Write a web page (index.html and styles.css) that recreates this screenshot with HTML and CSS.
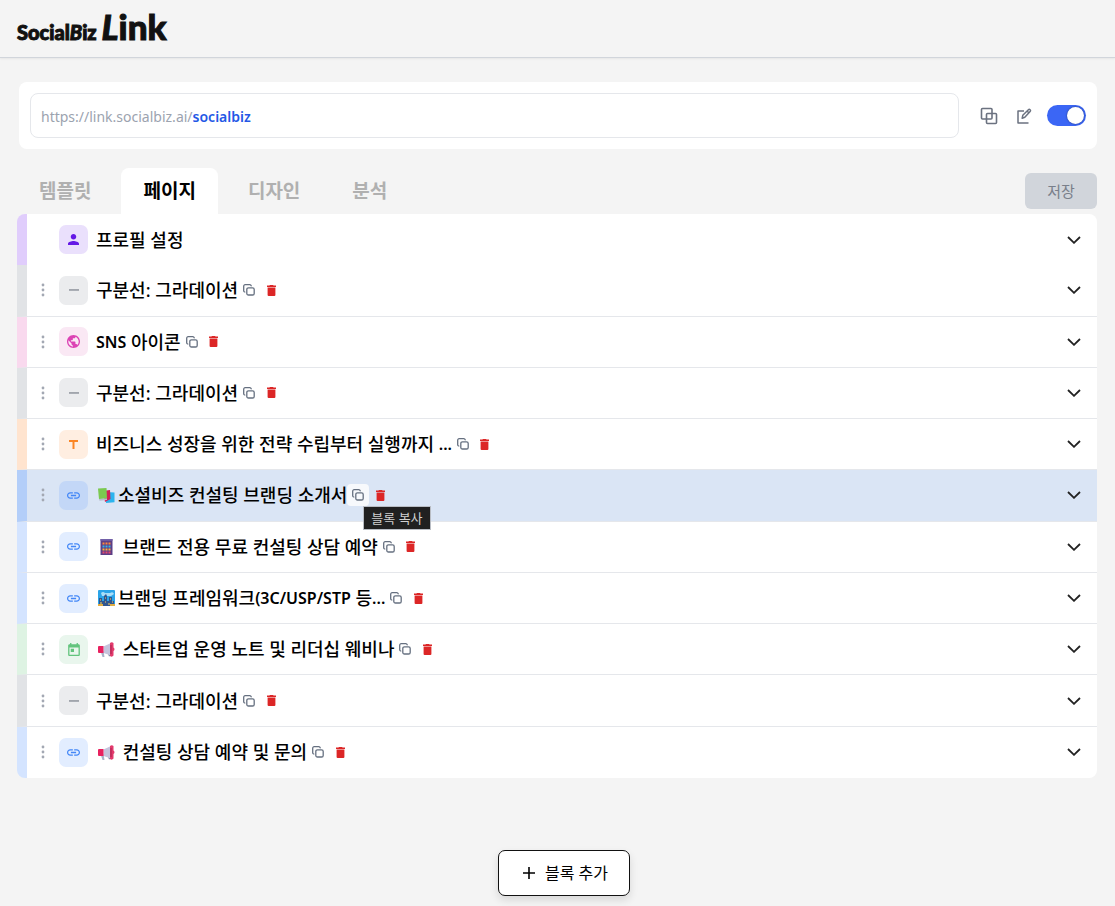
FILE: index.html
```html
<!DOCTYPE html>
<html lang="ko">
<head>
<meta charset="utf-8">
<meta name="viewport" content="width=device-width, initial-scale=1">
<title>SocialBiz Link</title>
<link rel="stylesheet" href="styles.css">
</head>
<body>
<svg class="sprite" aria-hidden="true">
  <symbol id="i-dots" viewBox="0 0 4 14"><circle cx="2" cy="2" r="1.4"/><circle cx="2" cy="7" r="1.4"/><circle cx="2" cy="12" r="1.4"/></symbol>
  <symbol id="i-copy" viewBox="0 0 12 12"><g fill="none" stroke="currentColor" stroke-width="1.300" stroke-linejoin="round" stroke-linecap="round"><rect x="3.8" y="3.8" width="7.4" height="7.2" rx="1.6"/><path d="M1.8 8C1.1 7.8.7 7.300.7 6.700V2.200C.7 1.300 1.300.7 2.200.7H6.800C7.500.7 8 1.100 8.200 1.800"/></g></symbol>
  <symbol id="i-trash" viewBox="0 0 9 11"><path d="M3 0h3l.6.6H9v1.500H0V.6h2.400zM.6 2.400h7.800V10q0 1-1 1H1.600q-1 0-1-1z"/></symbol>
  <symbol id="i-chev" viewBox="0 0 14 8"><path d="M1 1l6 5.800L13 1" fill="none" stroke="currentColor" stroke-width="1.800"/></symbol>
  <symbol id="i-link" viewBox="2 7 20 10"><path d="M3.900 12c0-1.710 1.390-3.100 3.100-3.100h4V7H7c-2.760 0-5 2.240-5 5s2.240 5 5 5h4v-1.900H7c-1.710 0-3.100-1.390-3.100-3.100zM8 13h8v-2H8v2zm9-6h-4v1.900h4c1.710 0 3.100 1.390 3.100 3.100s-1.390 3.100-3.100 3.100h-4V17h4c2.760 0 5-2.240 5-5s-2.240-5-5-5z"/></symbol>
  <symbol id="i-line" viewBox="0 0 10 2"><path d="M0 .2h10v1.500H0z"/></symbol>
  <symbol id="i-globe" viewBox="2 2 20 20"><path d="M12 2C6.480 2 2 6.480 2 12s4.480 10 10 10 10-4.480 10-10S17.520 2 12 2zm-1 17.930c-3.950-.49-7-3.850-7-7.930 0-.62.080-1.210.210-1.790L9 15v1c0 1.100.9 2 2 2v1.930zm6.900-2.540c-.26-.81-1-1.390-1.900-1.390h-1v-3c0-.55-.45-1-1-1H8v-2h2c.55 0 1-.45 1-1V7h2c1.100 0 2-.9 2-2v-.41c2.930 1.190 5 4.060 5 7.410 0 2.080-.8 3.970-2.100 5.390z"/></symbol>
  <symbol id="i-person" viewBox="4 4 16 16"><path d="M12 12c2.210 0 4-1.790 4-4s-1.790-4-4-4-4 1.790-4 4 1.790 4 4 4zm0 2c-2.670 0-8 1.340-8 4v2h16v-2c0-2.660-5.330-4-8-4z"/></symbol>
  <symbol id="i-type" viewBox="0 0 10 10"><path d="M0 0h10v2.200H6.100V10H3.900V2.200H0z"/></symbol>
  <symbol id="i-cal" viewBox="3 1 18 20"><path d="M19 3h-1V1h-2v2H8V1H6v2H5c-1.110 0-1.990.9-1.990 2L3 19c0 1.100.89 2 2 2h14c1.100 0 2-.9 2-2V5c0-1.100-.9-2-2-2zm0 16H5V8h14v11zM7 10h5v5H7z"/></symbol>
  <symbol id="i-horn" viewBox="0 0 17 15"><path d="M2.500 9h3l1 6h-2z" fill="#a9b0c8"/><path d="M9 9h3l1 4.500-2 1z" fill="#858da9"/><path d="M5.500 4.500L13 1v12.500L5.500 11z" fill="#c5c3dc"/><path d="M0 5q0-1 1-1h4.500v7H1q-1 0-1-1z" fill="#e8215f"/><path d="M12 1q1.700-1.400 3.500 0v4.500q2 1.500 0 3.500v4.500q-1.500 2-3.500.5z" fill="#e23a6c"/><path d="M13 3v9" stroke="#a62350"/></symbol>
  <symbol id="i-books" viewBox="0 0 17 15"><path d="M8 4l8.500.5v9.800L8 15z" fill="#2cb4ee"/><path d="M5 3l7-1 .5 9L7 14z" fill="#d21f58"/><path d="M0 .5L8.500 0 9 10.500 1 11z" fill="#7bc950"/><path d="M1 11l8-.5V12l-7.500.7z" fill="#b8bdd0"/></symbol>
  <symbol id="i-abacus" viewBox="0 0 12 16"><path d="M0 0h12v16H0z" fill="#5b3f86"/><path d="M0 0h12v1.800H0z" fill="#7260a8"/><g stroke-width="2" stroke-dasharray="2 1"><path d="M2 4.500h8" stroke="#ff8a3c"/><path d="M2 7.500h8" stroke="#35b7e8"/><path d="M2 10.500h8" stroke="#ffb23c"/><path d="M2 13.500h8" stroke="#e9476b"/></g></symbol>
  <symbol id="i-city" viewBox="0 0 17 16"><rect width="17" height="16" rx="1" fill="#2ba4e8"/><path d="M3 3q2-2 4 0h5q3-2 4 1l-3 2H4z" fill="#a9def8"/><path d="M1 16V8h3v3h2V6l2-2 1 2v5h2V7h3v4h2v5z" fill="#31568f"/><path d="M2 10h1m4-2h1m4 1h1M2 13h2m3-1h1m2 2h2m2-2h1" stroke="#ffd15a"/><path d="M0 14h5v2H0zm12 0h5v2h-5z" fill="#e0ad42"/></symbol>
</svg>

<header class="topbar">
  <a class="logo" href="#" aria-label="SocialBiz Link"><span class="logo-small">Social<i>B</i>iz</span><span class="logo-big"><i>L</i>ink</span></a>
</header>

<main class="page">
  <section class="url-card">
    <div class="url-field">
      <label for="slug">https://link.socialbiz.ai/</label>
      <input id="slug" type="text" value="socialbiz">
    </div>
    <div class="url-actions">
      <button type="button" class="plain" aria-label="링크 복사"><svg class="outline" width="18" height="18" viewBox="0 0 18 18" stroke="currentColor" stroke-width="1.600" stroke-linejoin="round"><rect x="1.500" y="1.500" width="10.500" height="10.500" rx="1"/><rect x="6.500" y="6.500" width="10" height="10" rx="1"/></svg></button>
      <button type="button" class="plain" aria-label="링크 편집"><svg class="outline" width="16" height="16" viewBox="0 0 16 16" stroke="currentColor" stroke-width="1.500" stroke-linejoin="round"><path d="M8 3H2v12h10.500"/><path d="M6.200 10.200l.6-2.900L12.400 1.700q.8-.8 1.700 0t0 1.800L8.800 9.300zM11 3l1.800 1.800"/></svg></button>
      <input class="switch" type="checkbox" role="switch" checked aria-label="공개">
    </div>
  </section>

  <div class="toolbar">
    <nav class="tabs">
      <button type="button" class="tab">템플릿</button>
      <button type="button" class="tab active">페이지</button>
      <button type="button" class="tab">디자인</button>
      <button type="button" class="tab">분석</button>
    </nav>
    <button type="button" class="save" disabled>저장</button>
  </div>

  <ul class="blocks">
    <li class="block profile">
      <span class="drag"></span>
      <span class="badge"><svg width="11" height="11"><use href="#i-person"/></svg></span>
      <span class="title">프로필 설정</span>
      <button type="button" class="expand" aria-label="펼치기"><svg width="14" height="8"><use href="#i-chev"/></svg></button>
    </li>
    <li class="block divider">
      <span class="drag"><svg width="4" height="14"><use href="#i-dots"/></svg></span>
      <span class="badge"><svg width="10" height="2"><use href="#i-line"/></svg></span>
      <span class="title">구분선: 그라데이션</span>
      <button type="button" class="act" aria-label="블록 복사"><svg width="12" height="12"><use href="#i-copy"/></svg></button>
      <button type="button" class="act del" aria-label="블록 삭제"><svg width="9" height="11"><use href="#i-trash"/></svg></button>
      <button type="button" class="expand" aria-label="펼치기"><svg width="14" height="8"><use href="#i-chev"/></svg></button>
    </li>
    <li class="block sns">
      <span class="drag"><svg width="4" height="14"><use href="#i-dots"/></svg></span>
      <span class="badge"><svg width="13" height="13"><use href="#i-globe"/></svg></span>
      <span class="title"><b>SNS</b> 아이콘</span>
      <button type="button" class="act" aria-label="블록 복사"><svg width="12" height="12"><use href="#i-copy"/></svg></button>
      <button type="button" class="act del" aria-label="블록 삭제"><svg width="9" height="11"><use href="#i-trash"/></svg></button>
      <button type="button" class="expand" aria-label="펼치기"><svg width="14" height="8"><use href="#i-chev"/></svg></button>
    </li>
    <li class="block divider">
      <span class="drag"><svg width="4" height="14"><use href="#i-dots"/></svg></span>
      <span class="badge"><svg width="10" height="2"><use href="#i-line"/></svg></span>
      <span class="title">구분선: 그라데이션</span>
      <button type="button" class="act" aria-label="블록 복사"><svg width="12" height="12"><use href="#i-copy"/></svg></button>
      <button type="button" class="act del" aria-label="블록 삭제"><svg width="9" height="11"><use href="#i-trash"/></svg></button>
      <button type="button" class="expand" aria-label="펼치기"><svg width="14" height="8"><use href="#i-chev"/></svg></button>
    </li>
    <li class="block text">
      <span class="drag"><svg width="4" height="14"><use href="#i-dots"/></svg></span>
      <span class="badge"><svg width="9" height="9"><use href="#i-type"/></svg></span>
      <span class="title">비즈니스 성장을 위한 전략 수립부터 실행까지 <b>...</b></span>
      <button type="button" class="act" aria-label="블록 복사"><svg width="12" height="12"><use href="#i-copy"/></svg></button>
      <button type="button" class="act del" aria-label="블록 삭제"><svg width="9" height="11"><use href="#i-trash"/></svg></button>
      <button type="button" class="expand" aria-label="펼치기"><svg width="14" height="8"><use href="#i-chev"/></svg></button>
    </li>
    <li class="block link selected">
      <span class="drag"><svg width="4" height="14"><use href="#i-dots"/></svg></span>
      <span class="badge"><svg width="13" height="7"><use href="#i-link"/></svg></span>
      <span class="title"><svg class="emoji" width="17" height="15"><use href="#i-books"/></svg>소셜비즈 컨설팅 브랜딩 소개서</span>
      <button type="button" class="act hover" aria-label="블록 복사"><svg width="12" height="12"><use href="#i-copy"/></svg><span class="tip" role="tooltip">블록 복사</span></button>
      <button type="button" class="act del" aria-label="블록 삭제"><svg width="9" height="11"><use href="#i-trash"/></svg></button>
      <button type="button" class="expand" aria-label="펼치기"><svg width="14" height="8"><use href="#i-chev"/></svg></button>
    </li>
    <li class="block link">
      <span class="drag"><svg width="4" height="14"><use href="#i-dots"/></svg></span>
      <span class="badge"><svg width="13" height="7"><use href="#i-link"/></svg></span>
      <span class="title"><svg class="emoji" width="17" height="16"><use href="#i-abacus"/></svg> 브랜드 전용 무료 컨설팅 상담 예약</span>
      <button type="button" class="act" aria-label="블록 복사"><svg width="12" height="12"><use href="#i-copy"/></svg></button>
      <button type="button" class="act del" aria-label="블록 삭제"><svg width="9" height="11"><use href="#i-trash"/></svg></button>
      <button type="button" class="expand" aria-label="펼치기"><svg width="14" height="8"><use href="#i-chev"/></svg></button>
    </li>
    <li class="block link">
      <span class="drag"><svg width="4" height="14"><use href="#i-dots"/></svg></span>
      <span class="badge"><svg width="13" height="7"><use href="#i-link"/></svg></span>
      <span class="title"><svg class="emoji" width="17" height="16"><use href="#i-city"/></svg>브랜딩 프레임워크<b>(3C/USP/STP</b> 등<b>...</b></span>
      <button type="button" class="act" aria-label="블록 복사"><svg width="12" height="12"><use href="#i-copy"/></svg></button>
      <button type="button" class="act del" aria-label="블록 삭제"><svg width="9" height="11"><use href="#i-trash"/></svg></button>
      <button type="button" class="expand" aria-label="펼치기"><svg width="14" height="8"><use href="#i-chev"/></svg></button>
    </li>
    <li class="block event">
      <span class="drag"><svg width="4" height="14"><use href="#i-dots"/></svg></span>
      <span class="badge"><svg width="12" height="13"><use href="#i-cal"/></svg></span>
      <span class="title"><svg class="emoji" width="17" height="15"><use href="#i-horn"/></svg> 스타트업 운영 노트 및 리더십 웨비나</span>
      <button type="button" class="act" aria-label="블록 복사"><svg width="12" height="12"><use href="#i-copy"/></svg></button>
      <button type="button" class="act del" aria-label="블록 삭제"><svg width="9" height="11"><use href="#i-trash"/></svg></button>
      <button type="button" class="expand" aria-label="펼치기"><svg width="14" height="8"><use href="#i-chev"/></svg></button>
    </li>
    <li class="block divider">
      <span class="drag"><svg width="4" height="14"><use href="#i-dots"/></svg></span>
      <span class="badge"><svg width="10" height="2"><use href="#i-line"/></svg></span>
      <span class="title">구분선: 그라데이션</span>
      <button type="button" class="act" aria-label="블록 복사"><svg width="12" height="12"><use href="#i-copy"/></svg></button>
      <button type="button" class="act del" aria-label="블록 삭제"><svg width="9" height="11"><use href="#i-trash"/></svg></button>
      <button type="button" class="expand" aria-label="펼치기"><svg width="14" height="8"><use href="#i-chev"/></svg></button>
    </li>
    <li class="block link">
      <span class="drag"><svg width="4" height="14"><use href="#i-dots"/></svg></span>
      <span class="badge"><svg width="13" height="7"><use href="#i-link"/></svg></span>
      <span class="title"><svg class="emoji" width="17" height="15"><use href="#i-horn"/></svg> 컨설팅 상담 예약 및 문의</span>
      <button type="button" class="act" aria-label="블록 복사"><svg width="12" height="12"><use href="#i-copy"/></svg></button>
      <button type="button" class="act del" aria-label="블록 삭제"><svg width="9" height="11"><use href="#i-trash"/></svg></button>
      <button type="button" class="expand" aria-label="펼치기"><svg width="14" height="8"><use href="#i-chev"/></svg></button>
    </li>
  </ul>

  <div class="add-bar">
    <button type="button" class="add"><svg width="12" height="12" viewBox="0 0 12 12"><path d="M6 0v12M0 6h12" stroke="currentColor" stroke-width="1.600"/></svg><span>블록 추가</span></button>
  </div>
</main>
</body>
</html>
```
FILE: styles.css
```css
* {
  box-sizing: border-box;
}

body {
  margin: 0;
  background: #f4f4f4;
  color: #000;
  font-family: "Noto Sans", "Noto Sans CJK KR", sans-serif;
  font-size: 14px;
}

button,
input {
  margin: 0;
  padding: 0;
  border: 0;
  background: none;
  color: inherit;
  font: inherit;
}

svg {
  display: block;
  fill: currentColor;
  flex: none;
}

.outline {
  fill: none;
}

.sprite {
  display: none;
}

.topbar {
  display: flex;
  align-items: center;
  height: 58px;
  padding: 0 17px;
  border-bottom: 1px solid #d1d5db;
  box-shadow: 0 1px 2px rgba(0, 0, 0, 0.06);
}

.logo {
  display: flex;
  align-items: baseline;
  gap: 5px;
  color: #111;
  font-family: Lato, sans-serif;
  font-weight: 900;
  line-height: 36px;
  text-decoration: none;
  -webkit-text-stroke: 1px #111;
}

.logo-small {
  font-size: 20px;
}

.logo-big {
  font-size: 35px;
}

.page {
  padding: 24px 18px 10px 17px;
}

.url-card {
  display: flex;
  align-items: center;
  gap: 21px;
  margin-left: 2px;
  padding: 11px;
  border-radius: 8px;
  background: #fff;
}

.url-field {
  display: flex;
  flex: 1;
  align-items: center;
  height: 45px;
  padding: 2px 10px 0;
  border: 1px solid #e5e7eb;
  border-radius: 8px;
}

.url-field label {
  color: #9ca3af;
}

.url-field input {
  flex: 1;
  min-width: 0;
  color: #2458e6;
  font-weight: 600;
}

.url-actions {
  display: flex;
  align-items: center;
  gap: 18px;
  color: #6b7280;
}

.switch {
  width: 39px;
  height: 21px;
  margin-left: -3px;
  padding: 2px;
  border-radius: 11px;
  background: #3b66f5;
  appearance: none;
}

.switch::before {
  display: block;
  width: 17px;
  height: 17px;
  margin-left: auto;
  border-radius: 50%;
  background: #fff;
  box-shadow: 0 0 2px rgba(0, 0, 0, 0.5);
  content: "";
}

.toolbar {
  display: flex;
  align-items: center;
  justify-content: space-between;
  margin-top: 19px;
}

.tabs {
  display: flex;
  gap: 8px;
}

.tab {
  height: 46px;
  padding: 0 22px 3px;
  border-radius: 8px 8px 0 0;
  color: #b0b0b0;
  font-size: 19px;
  font-weight: 700;
}

.tab.active {
  background: #fff;
  color: #000;
}

.save {
  width: 72px;
  height: 36px;
  padding-bottom: 2px;
  border-radius: 6px;
  background: #d1d5db;
  color: #797f8a;
  font-size: 15px;
}

.blocks {
  display: grid;
  grid-auto-rows: 1fr;
  min-height: 564px;
  margin: 0;
  padding: 0;
  list-style: none;
}

.block {
  display: flex;
  align-items: center;
  padding-right: 16px;
  border-bottom: 1px solid #e5e7eb;
  border-left: 10px solid #d4e4ff;
  border-left-color: var(--bar);
  background: #fff;
}

.block:first-child {
  border-bottom: 0;
  border-radius: 8px 8px 0 0;
}

.block:last-child {
  border-bottom: 0;
  border-radius: 0 0 8px 8px;
}

.drag {
  display: flex;
  justify-content: center;
  width: 32px;
  color: #a3a8b3;
}

.badge {
  display: grid;
  place-items: center;
  width: 29px;
  height: 29px;
  margin-right: 8px;
  border-radius: 7px;
  background: var(--tint);
  color: var(--ink);
}

.profile {
  --bar: #e0cdfc;
  --tint: #eae0fc;
  --ink: #6419e6;
}

.divider {
  --bar: #e1e3e6;
  --tint: #ebecee;
  --ink: #8f949c;
}

.sns {
  --bar: #f9d9ee;
  --tint: #fae8f4;
  --ink: #dc43b4;
}

.text {
  --bar: #ffe4cf;
  --tint: #ffeee1;
  --ink: #fb8524;
}

.link {
  --bar: #d4e4ff;
  --tint: #e2edff;
  --ink: #4387f7;
}

.event {
  --bar: #def3e3;
  --tint: #e9f6ed;
  --ink: #62c47d;
}

.selected {
  --bar: #b3cef9;
  --tint: #c3d7f7;
  background: #dae5f5;
}

.title {
  display: flex;
  align-items: center;
  font-size: 18px;
  font-weight: 500;
  line-height: 24px;
  white-space: pre;
}

.title b {
  font-size: 16px;
  font-weight: 600;
}

.emoji {
  margin: 0 3px 0 2px;
}

.act {
  position: relative;
  display: grid;
  place-items: center;
  width: 22px;
  height: 22px;
  border-radius: 4px;
  color: #667080;
}

.act.hover {
  background: #f7f9fc;
}

.act.del {
  color: #dc2626;
}

.tip {
  position: absolute;
  top: 22px;
  left: 16px;
  z-index: 1;
  padding: 0 7px;
  border: 1px solid #b9bdc4;
  background: #202020;
  color: #d0d0d0;
  font-size: 13px;
  line-height: 22px;
  white-space: nowrap;
}

.expand {
  margin-left: auto;
  color: #222;
}

.add-bar {
  display: flex;
  justify-content: center;
  margin-top: 72px;
  padding-left: 14px;
}

.add {
  display: flex;
  align-items: center;
  gap: 10px;
  height: 46px;
  padding: 0 21px 0 24px;
  border: 1px solid #111;
  border-radius: 7px;
  background: #fff;
  box-shadow: 0 4px 8px rgba(0, 0, 0, 0.12);
  font-size: 16px;
}

.add span {
  padding-bottom: 2px;
}
```
